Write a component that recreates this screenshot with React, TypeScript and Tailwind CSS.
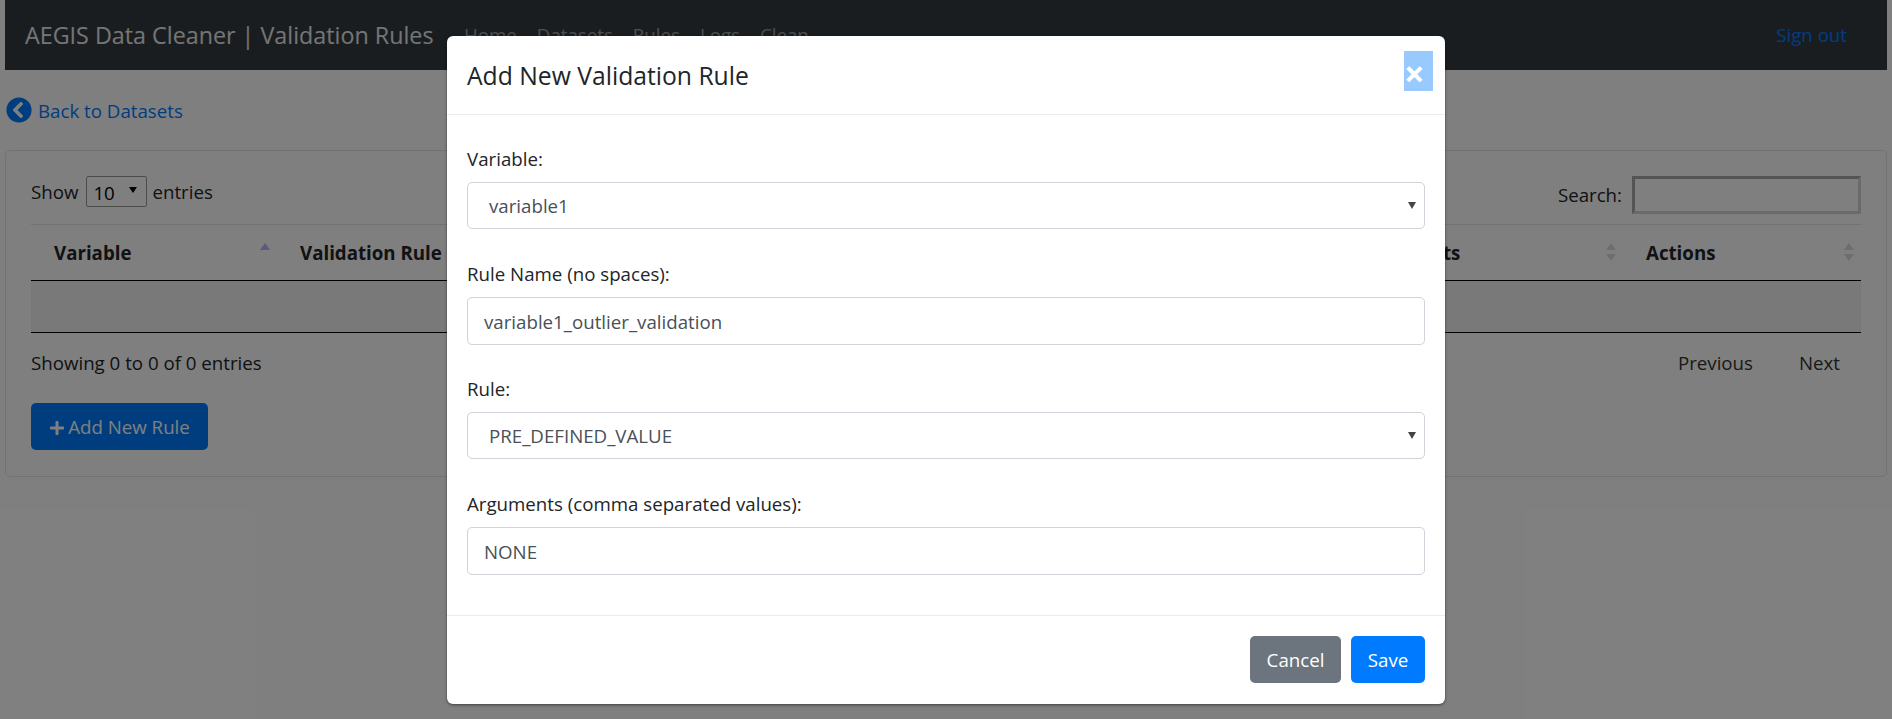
import { FaChevronCircleLeft, FaPlus } from "react-icons/fa";

const navLinks = ["Home", "Datasets", "Rules", "Logs", "Clean"];

function SortArrows({ active = false }: { active?: boolean }) {
  return (
    <svg width="12" height="20" viewBox="0 0 12 20" className="shrink-0">
      <path d="M6 1 L11 8 L1 8 Z" fill={active ? "#b4b4ff" : "#dcdcdc"} />
      {!active && <path d="M6 19 L11 12 L1 12 Z" fill="#dcdcdc" />}
    </svg>
  );
}

function HeaderCell({
  label,
  width,
  active,
}: {
  label: string;
  width: string;
  active?: boolean;
}) {
  return (
    <div className={`${width} flex items-center justify-between pl-[23px] pr-[6px]`}>
      <span className="pt-[2px] font-bold text-[#212529]">{label}</span>
      <SortArrows active={active} />
    </div>
  );
}

function SelectField({ label, value }: { label: string; value: string }) {
  return (
    <div className="mb-[31px]">
      <label className="block h-[28px] mb-[9px] leading-[28px] text-[#212529]">{label}</label>
      <div className="relative">
        <select
          defaultValue={value}
          className="block w-full h-[47px] appearance-none rounded-[5px] border border-[#ced4da] bg-white pl-[21px] pt-[2px] text-[#495057]"
        >
          <option>{value}</option>
        </select>
        <span className="absolute right-[9px] top-[20px] border-x-[4px] border-t-[7px] border-x-transparent border-t-[#444]" />
      </div>
    </div>
  );
}

function TextField({ label, value }: { label: string; value: string }) {
  return (
    <div className="mb-[30px]">
      <label className="block h-[28px] mb-[9px] leading-[28px] text-[#212529]">{label}</label>
      <input
        readOnly
        value={value}
        className="block w-full h-[48px] rounded-[5px] border border-[#ced4da] bg-white px-[16px] text-[#495057]"
      />
    </div>
  );
}

export default function App() {
  return (
    <div className="relative h-[719px] w-[1892px] overflow-hidden bg-white px-[5px] font-['Open_Sans',sans-serif] text-[18.7px] text-[#212529]">
      <nav className="flex h-[70px] items-center bg-[#343a40] pl-[20px] pr-[40px]">
        <span className="w-[439px] text-[23.3px] text-white/90">AEGIS Data Cleaner | Validation Rules</span>
        <div className="flex gap-[20px] text-white/50">
          {navLinks.map((link) => (
            <a key={link}>{link}</a>
          ))}
        </div>
        <a className="ml-auto text-[#007bff]">Sign out</a>
      </nav>

      <a className="mt-[27px] flex h-[26px] items-center gap-[6px] pl-[1px] text-[#007bff]">
        <FaChevronCircleLeft className="text-[26px]" />
        <span className="pt-[2px]">Back to Datasets</span>
      </a>

      <div className="mt-[27px] h-[327px] rounded-[5px] border border-black/10 px-[25px] pt-[25px]">
        <div className="flex h-[48px] items-start justify-between">
          <div className="flex items-center">
            <span className="pt-[2px]">Show</span>
            <div className="relative ml-[8px] mr-[5px] h-[31px] w-[61px] rounded-[2px] border border-[#999] pl-[6px] leading-[31px] text-black">
              10
              <span className="absolute right-[9px] top-[10px] border-x-[4px] border-t-[6px] border-x-transparent border-t-black" />
            </div>
            <span className="pt-[2px]">entries</span>
          </div>
          <div className="flex items-center gap-[10px]">
            Search:
            <input
              readOnly
              className="h-[38px] w-[229px] border-[3px] border-t-[#a9a9a9] border-l-[#a9a9a9] border-r-[#d4d4d4] border-b-[#d4d4d4]"
            />
          </div>
        </div>

        <div className="flex h-[57px] items-center border-y border-t-black/10 border-b-black">
          <HeaderCell label="Variable" width="w-[246px]" active />
          <HeaderCell label="Validation Rule" width="w-[400px]" />
          <HeaderCell label="Rule Name" width="w-[657px]" />
          <HeaderCell label="Arguments" width="w-[289px]" />
          <HeaderCell label="Actions" width="w-[238px]" />
        </div>
        <div className="h-[52px] border-b border-black bg-black/5" />

        <div className="flex h-[61px] items-center justify-between pr-[21px]">
          <span>Showing 0 to 0 of 0 entries</span>
          <div className="flex gap-[46px] text-[#333]">
            <span>Previous</span>
            <span>Next</span>
          </div>
        </div>

        <button className="mt-[9px] flex h-[47px] w-[177px] items-center justify-center gap-[3px] rounded-[5px] bg-[#007bff] pt-[2px] text-white">
          <FaPlus className="text-[16px]" />
          Add New Rule
        </button>
      </div>

      {/* modal backdrop + dialog */}
      <div className="absolute inset-0 bg-black/50">
        <div className="absolute left-[447px] top-[36px] h-[668px] w-[998px] rounded-[6px] bg-white shadow-[0_1px_3px_rgba(0,0,0,0.5)]">
          <div className="flex h-[79px] items-start justify-between border-b border-[#e9ecef] pl-[20px] pr-[12px]">
            <h5 className="mt-[22px] text-[24.7px] font-medium leading-[36px] text-[#212529]">
              Add New Validation Rule
            </h5>
            <button className="mt-[15px] flex h-[40px] w-[29px] items-start justify-start bg-[#99caff] text-[36px] font-bold leading-[45px] text-white">
              ×
            </button>
          </div>

          <div className="h-[500px] px-[20px] pt-[30px]">
            <SelectField label="Variable:" value="variable1" />
            <TextField label="Rule Name (no spaces):" value="variable1_outlier_validation" />
            <SelectField label="Rule:" value="PRE_DEFINED_VALUE" />
            <TextField label="Arguments (comma separated values):" value="NONE" />
          </div>

          <div className="flex h-[89px] items-start justify-end gap-[10px] border-t border-[#e9ecef] pr-[20px] pt-[20px]">
            <button className="h-[47px] w-[91px] rounded-[5px] bg-[#6c757d] pt-[2px] text-white">Cancel</button>
            <button className="h-[47px] w-[74px] rounded-[5px] bg-[#007bff] pt-[2px] text-white">Save</button>
          </div>
        </div>
      </div>
    </div>
  );
}
